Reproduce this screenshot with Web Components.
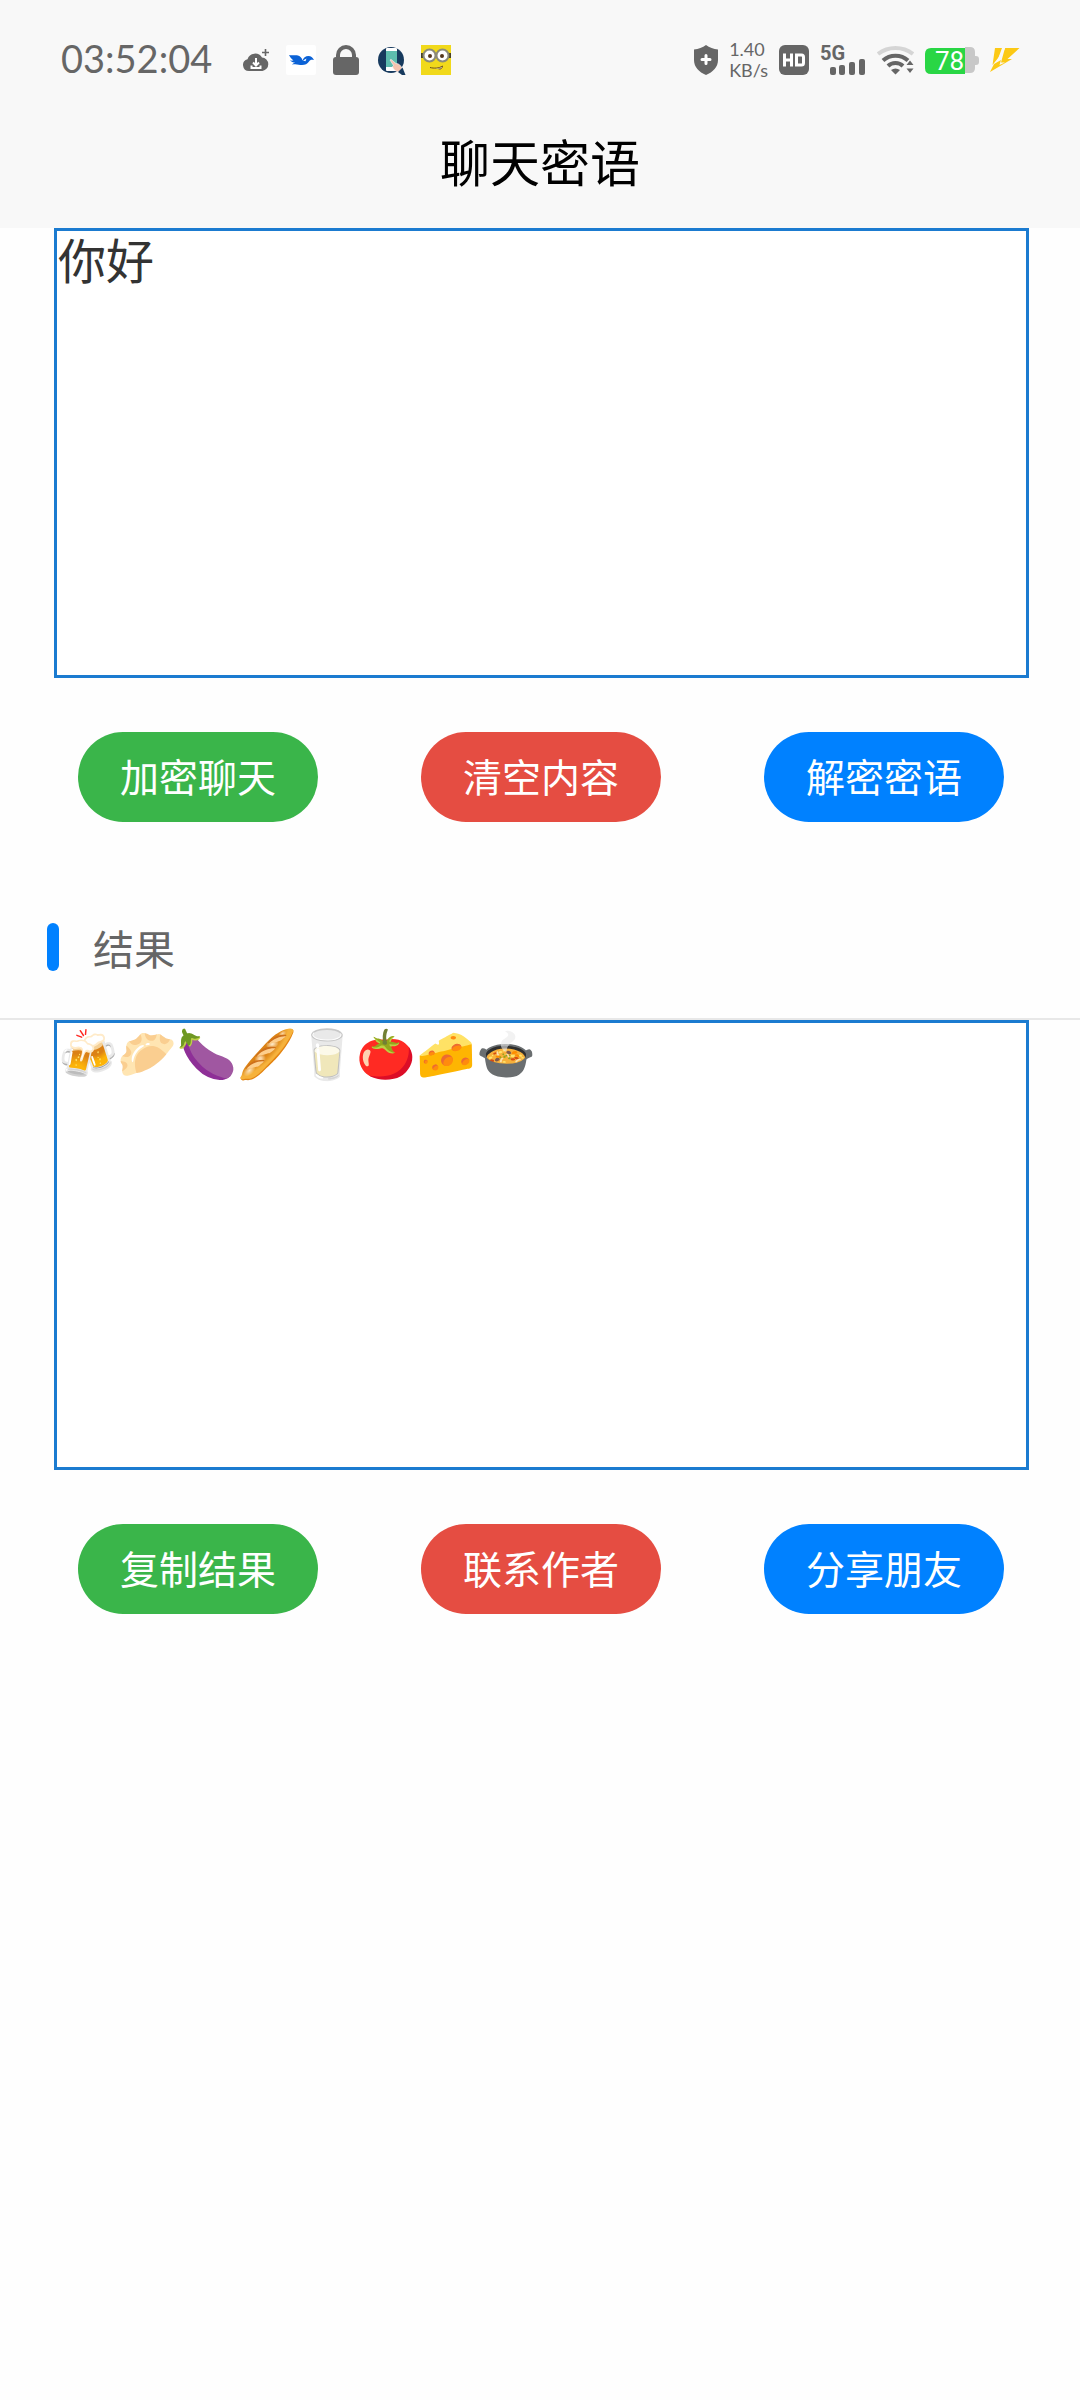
<!DOCTYPE html>
<html lang="zh-CN">
<head>
<meta charset="utf-8">
<meta name="viewport" content="width=device-width, initial-scale=1">
<title>聊天密语</title>
<style>
  body {
    margin: 0;
    background: #fefefe;
    color: #333;
    font-family: "Noto Sans CJK SC", "Noto Sans", sans-serif;
  }
</style>
</head>
<body>
<chat-app></chat-app>

<script>
class StatusBar extends HTMLElement {
  constructor() {
    super();
    this._shadowRoot = this.attachShadow({ mode: "open" });
  }

  connectedCallback() {
    this.render();
  }

  render() {
    this._shadowRoot.innerHTML = `
      <style>
        :host {
          display: flex;
          justify-content: space-between;
          align-items: center;
          padding: 40px 60px 20px;
          height: 40px;
          color: #666;
          font-family: Lato, "Liberation Sans", sans-serif;
        }
        .group { display: flex; align-items: center; }
        .apps { gap: 15px; }
        time { font-size: 38px; line-height: 40px; padding: 0 29px 4px 1px; }
        .right { gap: 11px; }
        .speed { font-size: 18px; line-height: 21px; }
        .speed div { white-space: nowrap; }
        svg { display: block; flex: none; }
      </style>
      <div class="group">
        <time>03:52:04</time>
        <div class="group apps">
          <svg width="30" height="30" viewBox="0 0 30 30">
            <path fill="#666" d="M8 26a6 6 0 0 1-1.500-11.800A8 8 0 0 1 21 12.500a6.800 6.800 0 0 1 .5 13.500z"/>
            <path stroke="#666" stroke-width="1.600" d="M24.500 4v7M21 7.500h7"/>
            <path fill="none" stroke="#fff" stroke-width="2" d="M15 13v7M12 17.500l3 3 3-3M10.500 20.500v2.500h9v-2.500"/>
          </svg>
          <svg width="30" height="30" viewBox="0 0 30 30">
            <rect width="30" height="30" rx="2" fill="#fff"/>
            <path fill="#0b62d6" d="M3 10c3 1 6-.5 9 .5 2.500 1 4 2.500 4.500 5 .8-2.500 3-4.500 6-4.500 2.500 0 4 1.500 5.500 4-2.500-.7-4-.3-5 1.500-1.500 2.500-4 3.500-7 3.500-3.500 0-5-1.500-10-.5 1.200-1 2-1.400 3.200-1.700-2-.3-4-1-5.200-2.300 1.500.2 2.500.2 3.500 0C5.500 13.800 4 12.300 3 10z"/>
            <path fill="#fff" d="M17 15.500l3.500-2-1 2.800z"/>
          </svg>
          <svg width="30" height="30" viewBox="0 0 30 30">
            <rect x="2" y="12" width="26" height="18" rx="3" fill="#666"/>
            <path fill="none" stroke="#666" stroke-width="4" d="M7 14V10a8 8 0 0 1 16 0v4"/>
          </svg>
          <svg width="30" height="30" viewBox="0 0 30 30">
            <circle cx="15" cy="15" r="13" fill="#173a5e"/>
            <rect x="10" y="3" width="11" height="23" rx="1" fill="#fff"/>
            <rect x="10" y="6" width="11" height="16" fill="#5dbcae"/>
            <path fill="#f5c3ae" stroke="#f8f8f8" stroke-width=".6" d="M14 15c1-1 2 0 3 1l3 2.500c3 0 5 2 6 5l-4 3.500c-3-1-5-3-5.500-5.500l1-1z"/>
            <path fill="#173a5e" d="M22 27l4.500-4.500L29.500 30H26z"/>
          </svg>
          <svg width="30" height="30" viewBox="0 0 30 30">
            <rect width="30" height="30" fill="#f1d91b"/>
            <path fill="#4a4320" d="M0 8h5v5H0zM25 8h5v5h-5z"/>
            <circle cx="8.500" cy="10.500" r="6" fill="#fff" stroke="#8c8b78" stroke-width="2"/>
            <circle cx="21.500" cy="10.500" r="6" fill="#fff" stroke="#8c8b78" stroke-width="2"/>
            <circle cx="9" cy="11" r="2" fill="#54371c"/>
            <circle cx="21" cy="11" r="2" fill="#54371c"/>
            <path fill="#fff" stroke="#6a4c18" d="M9 22.500c4 1 9 1 12.500-1.500-.5 2.500-1.500 3.500-4 2.800"/>
          </svg>
        </div>
      </div>
      <div class="group right">
        <svg width="24" height="30" viewBox="0 0 24 30">
          <path fill="#666" d="M12 0c3.500 2.500 7.500 4 12 4.500V15c0 7-5 12-12 15C5 27 0 22 0 15V4.500C4.500 4 8.500 2.500 12 0z"/>
          <path stroke="#fff" stroke-width="3" stroke-linecap="round" d="M12 10.500v8M8 14.500h8"/>
        </svg>
        <div class="speed"><div>1.40</div><div>KB/s</div></div>
        <svg width="30" height="30" viewBox="0 0 30 30" role="img" aria-label="HD">
          <rect width="30" height="30" rx="6" fill="#666"/>
          <path fill="none" stroke="#fff" stroke-width="3" d="M5.500 8.500v13M12.500 8.500v13M5.500 15h7M17.500 10h5q2 0 2 2v6q0 2-2 2h-5z"/>
        </svg>
        <svg width="46" height="44" viewBox="0 -7 46 44">
          <text x="0" y="15" font-family="Roboto, sans-serif" font-size="20" font-weight="700" fill="#666">5G</text>
          <g fill="#666">
            <rect x="10" y="22" width="6" height="8" rx="2"/>
            <rect x="19" y="20" width="6" height="10" rx="2"/>
            <rect x="29" y="17" width="6" height="13" rx="2"/>
            <rect x="39" y="14" width="6" height="16" rx="2"/>
          </g>
        </svg>
        <svg width="37" height="30" viewBox="0 0 37 30">
          <g fill="none" stroke-width="4">
            <path stroke="#d5d5d5" d="M1 9C11 1 26 1 36 9"/>
            <path stroke="#666" d="M6 15.500c7-6.500 18-6.500 25 0"/>
            <path stroke="#666" d="M11 21c4-4 11-4 15 0"/>
          </g>
          <path fill="#666" d="M14 25q4.500-3 9 0l-4.500 4.500zM29.500 20l3.500-4.500 3.500 4.500zM29.500 23.500l3.500 4.500 3.500-4.500z"/>
        </svg>
        <svg width="54" height="30" viewBox="0 0 54 30" role="img" aria-label="78%">
          <path fill="#c8c8c8" d="M40 2h5q5 0 5 5v4h1q3 0 3 3v3q0 3-3 3h-1v3q0 5-5 5h-5z"/>
          <path fill="#29d645" d="M6 3h34v26H6q-6 0-6-6V9q0-6 6-6z"/>
          <text x="10" y="25" font-family="Roboto, sans-serif" font-size="26" fill="#fff">78</text>
        </svg>
        <svg width="30" height="30" viewBox="0 0 30 30">
          <path fill="#fcc915" d="M5 3h7L8.500 12.500 2.500 20zM15 3h14.500L17.500 14H22L0 27l4-8 7-4-1.500 5L15 17.500h-4z"/>
          <path stroke="#f8f8f8" stroke-width="1.500" d="M14.500 3L8 15"/>
        </svg>
      </div>
    `;
  }
}

class PageHeader extends HTMLElement {
  constructor() {
    super();
    this._shadowRoot = this.attachShadow({ mode: "open" });
  }

  connectedCallback() {
    this._shadowRoot.innerHTML = `
      <style>
        :host { display: block; background: #f8f8f8; }
        h1 {
          margin: 0;
          padding-bottom: 8px;
          color: #000;
          font-size: 50px;
          font-weight: 400;
          line-height: 120px;
          text-align: center;
        }
      </style>
      <status-bar></status-bar>
      <h1><slot></slot></h1>
    `;
  }
}

class TextPanel extends HTMLElement {
  constructor() {
    super();
    this._shadowRoot = this.attachShadow({ mode: "open" });
  }

  connectedCallback() {
    this._shadowRoot.innerHTML = `
      <style>
        :host { display: block; }
        textarea {
          display: block;
          box-sizing: border-box;
          width: 100%;
          height: 450px;
          margin: 0;
          padding: 0 1px;
          border: 3px solid #1b7bd0;
          border-radius: 0;
          outline: none;
          resize: none;
          background: #fff;
          color: #333;
          font-family: "Noto Sans CJK SC", "Noto Color Emoji", sans-serif;
          font-size: 48px;
          line-height: 54px;
        }
      </style>
      <textarea></textarea>
    `;
    const area = this._shadowRoot.querySelector("textarea");
    area.value = this.getAttribute("value");
    area.setAttribute("aria-label", this.getAttribute("label"));
  }
}

class PillButton extends HTMLElement {
  constructor() {
    super();
    this._shadowRoot = this.attachShadow({ mode: "open" });
  }

  connectedCallback() {
    this._shadowRoot.innerHTML = `
      <style>
        :host { display: block; }
        :host([type="success"]) { --pill: #3ab54a; }
        :host([type="danger"]) { --pill: #e54d42; }
        :host([type="primary"]) { --pill: #0081ff; }
        button {
          display: block;
          width: 240px;
          height: 90px;
          padding: 0 0 5px;
          border: 0;
          border-radius: 45px;
          background: var(--pill);
          color: #fff;
          font-family: inherit;
          font-size: 39px;
        }
      </style>
      <button type="button"><slot></slot></button>
    `;
  }
}

class ButtonRow extends HTMLElement {
  constructor() {
    super();
    this._shadowRoot = this.attachShadow({ mode: "open" });
  }

  connectedCallback() {
    this._shadowRoot.innerHTML = `
      <style>
        :host {
          display: flex;
          justify-content: space-between;
          padding: 54px 25px 0 24px;
        }
      </style>
      <slot></slot>
    `;
  }
}

class SectionTitle extends HTMLElement {
  constructor() {
    super();
    this._shadowRoot = this.attachShadow({ mode: "open" });
  }

  connectedCallback() {
    this._shadowRoot.innerHTML = `
      <style>
        :host {
          display: flex;
          align-items: center;
          gap: 34px;
          height: 142px;
          margin-top: 54px;
          padding-left: 47px;
          border-bottom: 2px solid #e8e8e8;
        }
        .bar { width: 12px; height: 48px; border-radius: 6px; background: #0081ff; }
        h2 { margin: 0; color: #666; font-size: 41px; font-weight: 400; line-height: 60px; }
      </style>
      <div class="bar"></div>
      <h2><slot></slot></h2>
    `;
  }
}

class ChatApp extends HTMLElement {
  constructor() {
    super();
    this._shadowRoot = this.attachShadow({ mode: "open" });
  }

  connectedCallback() {
    this._shadowRoot.innerHTML = `
      <style>
        :host { display: block; }
        section { padding: 0 51px 0 54px; }
      </style>
      <page-header>聊天密语</page-header>
      <section>
        <text-panel label="内容" value="你好"></text-panel>
        <button-row>
          <pill-button type="success">加密聊天</pill-button>
          <pill-button type="danger">清空内容</pill-button>
          <pill-button type="primary">解密密语</pill-button>
        </button-row>
      </section>
      <section-title>结果</section-title>
      <section>
        <text-panel label="结果" value="🍻🥟🍆🥖🥛🍅🧀🍲"></text-panel>
        <button-row>
          <pill-button type="success">复制结果</pill-button>
          <pill-button type="danger">联系作者</pill-button>
          <pill-button type="primary">分享朋友</pill-button>
        </button-row>
      </section>
    `;
  }
}

customElements.define("status-bar", StatusBar);
customElements.define("page-header", PageHeader);
customElements.define("text-panel", TextPanel);
customElements.define("pill-button", PillButton);
customElements.define("button-row", ButtonRow);
customElements.define("section-title", SectionTitle);
customElements.define("chat-app", ChatApp);
</script>
</body>
</html>
